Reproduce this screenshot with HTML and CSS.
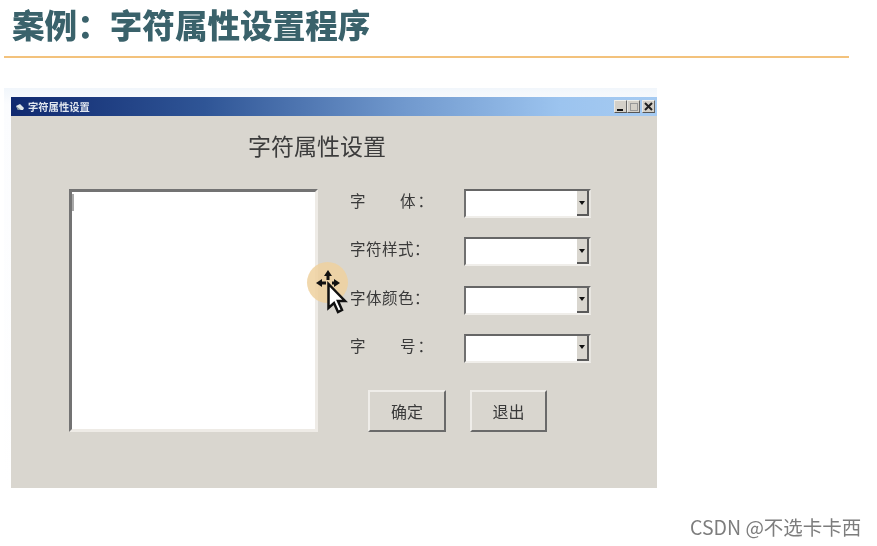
FILE: index.html
```html
<!DOCTYPE html>
<html lang="zh-CN">
<head>
    <meta charset="UTF-8">
    <meta name="viewport" content="width=device-width, initial-scale=1.0">
    <title>字符属性设置程序</title>
    <link rel="stylesheet" href="styles.css">
</head>
<body>
    <div class="slide">
        <h1 class="slide-title">案例：字符属性设置程序</h1>
        <div class="slide-rule"></div>

        <div class="window-glow">
            <div class="window">
                <div class="title-bar">
                    <div class="title-left">
                        <svg class="app-icon" width="10" height="8" viewBox="0 0 10 8">
                            <path d="M1 3 L5 1 L9 5 L8 7 L3 7 Z" fill="#dfe6ea"/>
                            <path d="M1 3 L3 7 L6 7 Z" fill="#7f8f9a"/>
                        </svg>
                        <span class="title-text">字符属性设置</span>
                    </div>
                    <div class="title-buttons">
                        <div class="cap-btn"><span class="cap-min"></span></div>
                        <div class="cap-btn"><span class="cap-max"></span></div>
                        <div class="cap-btn cap-close">
                            <svg width="9" height="9" viewBox="0 0 9 9">
                                <path d="M1 1 L8 8 M8 1 L1 8" stroke="#222" stroke-width="2"/>
                            </svg>
                        </div>
                    </div>
                </div>

                <div class="window-body">
                    <div class="form-heading">字符属性设置</div>
                    <div class="form-main">
                        <div class="preview-box"><span class="text-caret"></span></div>
                        <div class="options">
                            <div class="option-row">
                                <div class="option-label spaced"><span>字</span><span>体：</span></div>
                                <div class="combo"><div class="combo-btn"><span class="combo-arrow"></span></div></div>
                            </div>
                            <div class="option-row">
                                <div class="option-label">字符样式：</div>
                                <div class="combo"><div class="combo-btn"><span class="combo-arrow"></span></div></div>
                            </div>
                            <div class="option-row">
                                <div class="option-label">字体颜色：</div>
                                <div class="combo"><div class="combo-btn"><span class="combo-arrow"></span></div></div>
                            </div>
                            <div class="option-row">
                                <div class="option-label spaced"><span>字</span><span>号：</span></div>
                                <div class="combo"><div class="combo-btn"><span class="combo-arrow"></span></div></div>
                            </div>
                            <div class="actions">
                                <div class="win-btn">确定</div>
                                <div class="win-btn">退出</div>
                            </div>
                        </div>
                    </div>
                </div>
            </div>
        </div>

        <!-- recorded mouse pointer -->
        <div class="cursor-halo"></div>
        <svg class="cursor" width="36" height="50" viewBox="0 0 36 50">
            <path d="M14 2 L10 8 L12.5 8 L12.5 12 L15.5 12 L15.5 8 L18 8 Z" fill="#111"/>
            <path d="M2 15 L8 11 L8 13.5 L12 13.5 L12 16.5 L8 16.5 L8 19 Z" fill="#111"/>
            <path d="M26 15 L20 11 L20 13.5 L18 13.5 L18 16.5 L20 16.5 L20 19 Z" fill="#111"/>
            <path d="M14.5 16 L14.5 40 L20 35 L24 44 L28 42 L24 33 L31 33 Z" fill="#fff" stroke="#111" stroke-width="2.5"/>
        </svg>

        <div class="watermark">CSDN @不选卡卡西</div>
    </div>
</body>
</html>
```

FILE: styles.css
```css
* {
    box-sizing: border-box;
}

body {
    margin: 0;
    background: #fff;
    font-family: "Noto Sans CJK SC", "Liberation Sans", sans-serif;
}

.slide {
    position: relative;
    width: 877px;
    height: 546px;
    overflow: hidden;
    filter: blur(0.4px);
}

.slide-title {
    margin: 0;
    padding: 2px 0 0 12px;
    height: 56px;
    font-size: 32.6px;
    line-height: 44px;
    font-weight: 900;
    color: #3a626b;
    white-space: nowrap;
}

.slide-rule {
    width: 845px;
    height: 2px;
    margin-left: 4px;
    background: #f3c27c;
}

.window-glow {
    width: 653px;
    height: 402px;
    margin: 30px 0 0 4px;
    padding: 9px 0 0 7px;
    background: linear-gradient(180deg, #f1f6fb 0%, #fbfcfe 4%, #fff 100%);
}

.window {
    width: 646px;
    height: 391px;
    background: #d9d6cf;
    display: flex;
    flex-direction: column;
}

.title-bar {
    height: 19px;
    flex-shrink: 0;
    display: flex;
    justify-content: space-between;
    align-items: center;
    padding: 0 2px 0 4px;
    background: linear-gradient(90deg, #10296f 0%, #2f5596 30%, #6f97cc 60%, #9cc4ef 85%, #a6cbf2 100%);
}

.title-left {
    display: flex;
    align-items: center;
    gap: 3px;
}

.title-text {
    font-size: 10.3px;
    line-height: 14px;
    font-weight: 700;
    color: #dfe5ee;
}

.title-buttons {
    display: flex;
    align-items: center;
}

.cap-btn {
    width: 13px;
    height: 13px;
    background: #d4d0c8;
    border: 1px solid;
    border-color: #eeeeea #666 #555 #e8e8e4;
    display: flex;
    align-items: center;
    justify-content: center;
}

.cap-close {
    margin-left: 2px;
}

.cap-min {
    width: 6px;
    height: 2px;
    background: #111;
    margin-top: 6px;
    margin-right: 2px;
}

.cap-max {
    width: 8px;
    height: 8px;
    border: 1px solid #999;
}

.window-body {
    flex: 1;
    padding-left: 58px;
}

.form-heading {
    width: 496px;
    padding-top: 13px;
    height: 73px;
    text-align: center;
    font-size: 23px;
    line-height: 33px;
    color: #3c3c3c;
    white-space: nowrap;
}

.form-main {
    display: flex;
    gap: 32px;
}

.preview-box {
    width: 249px;
    height: 243px;
    background: #fff;
    border: 3px solid;
    border-color: #737373 #eeebe6 #eeebe6 #737373;
    padding-top: 2px;
}

.text-caret {
    display: block;
    width: 2px;
    height: 17px;
    background: #a8a8a8;
}

.options {
    display: flex;
    flex-direction: column;
}

.option-row {
    display: flex;
    height: 29px;
    margin-bottom: 19.3px;
}

.option-label {
    width: 114px;
    padding-right: 37px;
    font-size: 15.5px;
    line-height: 22px;
    letter-spacing: 0.5px;
    color: #3a3a3a;
    white-space: nowrap;
}

.option-label.spaced {
    display: flex;
    justify-content: space-between;
    padding-right: 29px;
    letter-spacing: 2px;
}

.combo {
    width: 127px;
    height: 29px;
    background: #fff;
    border: 2px solid;
    border-color: #666 #e8e6e1 #f0eeea #707070;
    display: flex;
    justify-content: flex-end;
}

.combo-btn {
    width: 12px;
    background: #d9d6cf;
    border-right: 2px solid #5a5a5a;
    border-bottom: 2px solid #5a5a5a;
    display: flex;
    align-items: center;
    justify-content: center;
}

.combo-arrow {
    width: 0;
    height: 0;
    border-left: 3px solid transparent;
    border-right: 3px solid transparent;
    border-top: 4px solid #111;
}

.actions {
    display: flex;
    gap: 24px;
    margin: 8px 0 0 18px;
}

.win-btn {
    width: 78px;
    height: 42px;
    background: #d9d6cf;
    border: 2px solid;
    border-color: #efede9 #6a6a6a #6a6a6a #efede9;
    display: flex;
    align-items: center;
    justify-content: center;
    font-size: 16px;
    color: #3a3a3a;
}

.win-btn + .win-btn {
    width: 77px;
}

.cursor-halo {
    position: absolute;
    left: 307px;
    top: 262px;
    width: 41px;
    height: 41px;
    border-radius: 50%;
    background: #eed19f;
    opacity: 0.85;
}

.cursor {
    position: absolute;
    left: 314px;
    top: 268px;
}

.watermark {
    position: absolute;
    left: 690px;
    top: 513px;
    font-size: 19.5px;
    line-height: 27px;
    color: #7d7d7d;
    white-space: nowrap;
}
```
